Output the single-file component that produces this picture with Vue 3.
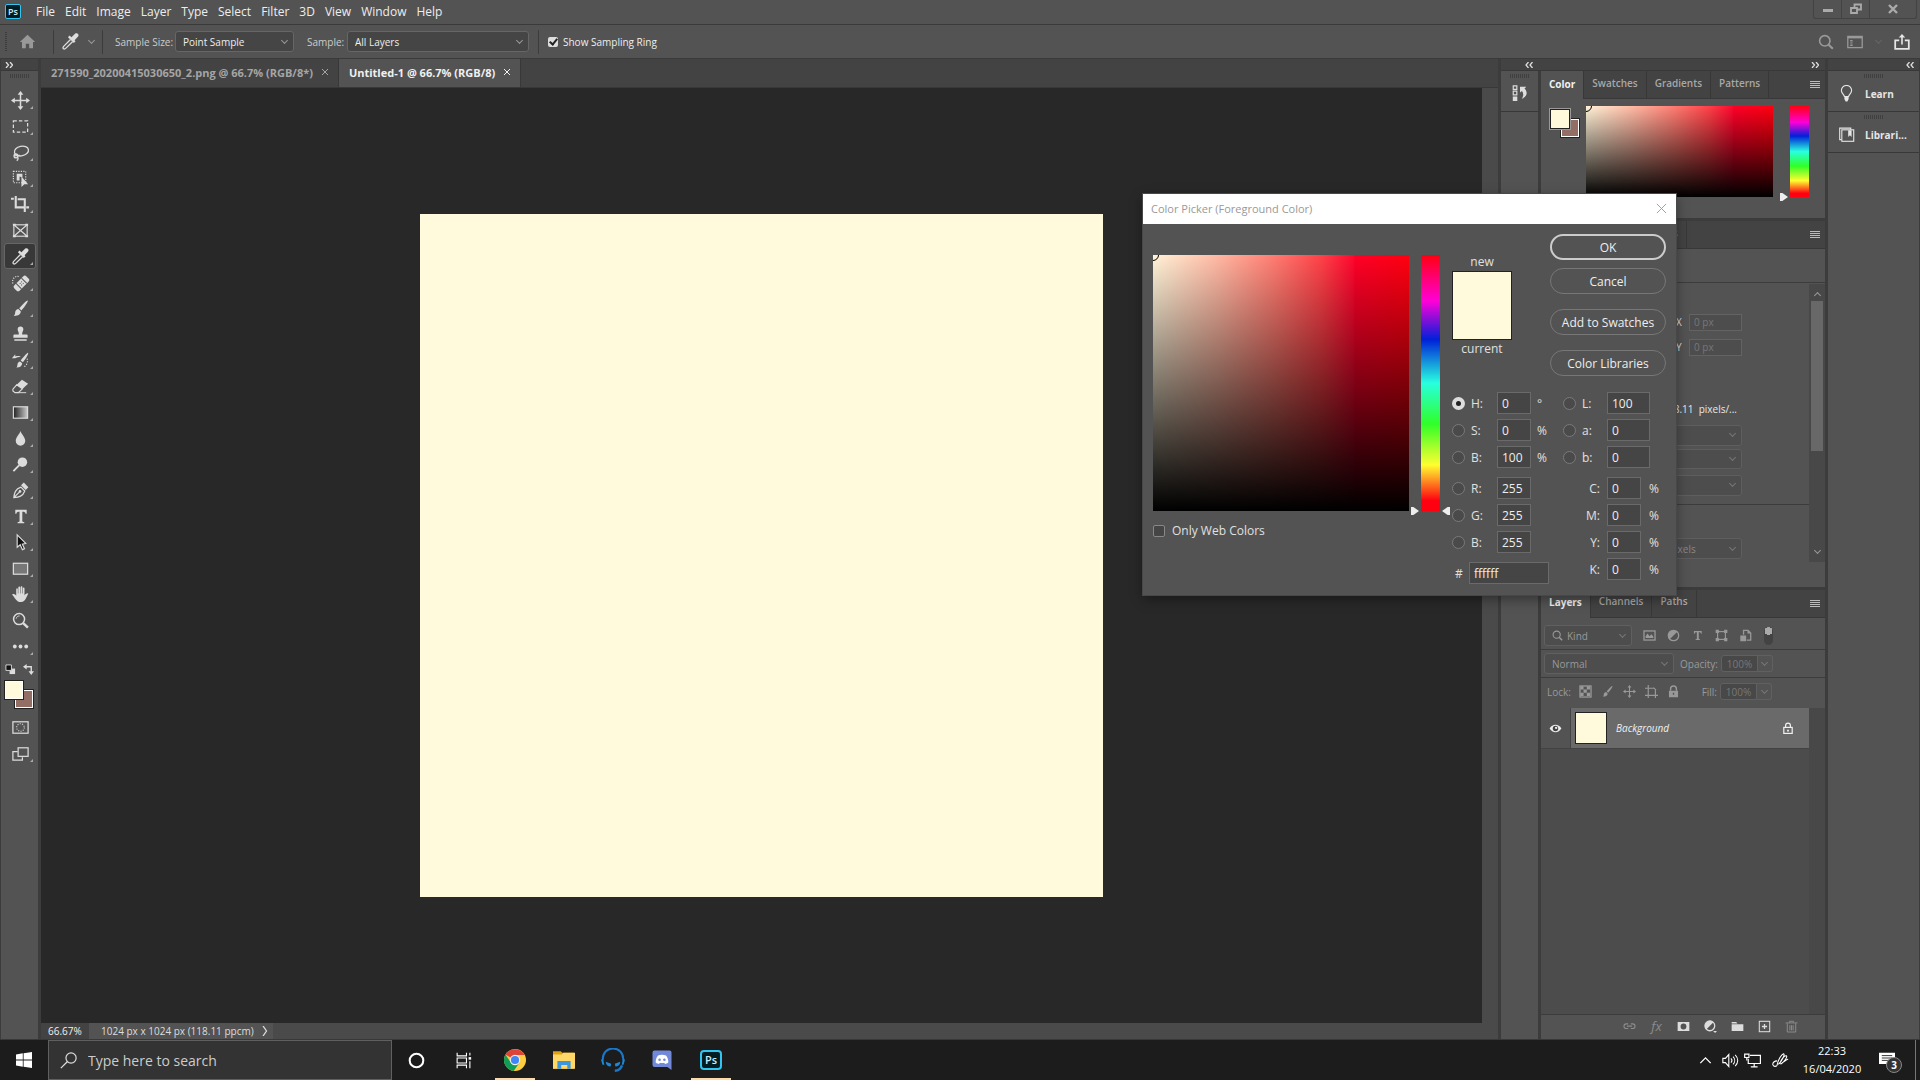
<script setup>
import { reactive, ref } from 'vue'

// inner markup of the 20x20 icons
const icons = {
  move: '<path d="M10 2v16M2 10h16" stroke="currentColor" stroke-width="1.6"/><path d="M10 0l3 4H7zM10 20l3-4H7zM0 10l4-3v6zM20 10l-4-3v6z" fill="currentColor"/>',
  marquee: '<rect x="2.5" y="4" width="15" height="12" fill="none" stroke="currentColor" stroke-width="1.3" stroke-dasharray="3.6 2.2"/>',
  lasso: '<g fill="none" stroke="currentColor" stroke-width="1.4"><ellipse cx="11" cy="8.5" rx="7.5" ry="5" transform="rotate(-12 11 8.5)"/><circle cx="5.2" cy="13.6" r="2"/><path d="M6.5 14.5c1.5 1.5 1 3-.5 4M3.4 13.5l6-.4"/></g>',
  object: '<rect x="2.5" y="2.5" width="13" height="12" fill="none" stroke="currentColor" stroke-width="1.2" stroke-dasharray="1.3 1.3"/><path d="M6 5h6v4l-3-1v4H6zM11 8l7 8h-4l-3 3z" fill="currentColor"/>',
  crop: '<path d="M0 4h3M5 1v12h9M16 13h3M7 4.5h7.5V18" fill="none" stroke="currentColor" stroke-width="2.2"/>',
  frame: '<g fill="none" stroke="currentColor" stroke-width="1.2"><rect x="3" y="4" width="14" height="12"/><path d="M3 4l14 12M17 4L3 16"/></g><path d="M2 3h3v2H2zM15 3h3v2h-3zM2 15h3v2H2zM15 15h3v2h-3z" fill="currentColor"/>',
  dropper: '<path d="M11 5.5l4-3.8c1.8-1.5 4.6.9 3 3l-3.7 4 1 1-1.8 1.8-6.2-6L9 3.8z" fill="currentColor"/><path d="M10 7.8l-6.7 6.8c-.8.8-1.8 1.9-.8 2.9s2.2 0 3-.8L12.3 10" fill="none" stroke="currentColor" stroke-width="1.4"/>',
  heal: '<g transform="rotate(-45 11 11)"><rect x="2" y="7" width="18" height="8" rx="2.5" fill="currentColor"/><path d="M7 7v8M15 7v8" stroke="#535353" stroke-width="1"/><path d="M9.5 9.5h1v1h-1zM11.8 9.5h1v1h-1zM9.5 11.8h1v1h-1zM11.8 11.8h1v1h-1z" fill="#444"/></g><path d="M2 11c-1.500-4 2-9 7-7" fill="none" stroke="currentColor" stroke-width="1.2" stroke-dasharray="1.200 1.400"/>',
  brush: '<path d="M17.500 1.500c1 .5-2.500 6-6.500 10.500L8.600 9.800C12.500 5.500 16.500 1 17.500 1.500zM7.800 10.600l2.500 2.400c0 3.500-3 5-7.500 4.800 1.500-1 1.300-2 1.600-3.800.2-1.800 1.600-3.400 3.400-3.400z" fill="currentColor"/>',
  stamp: '<path d="M10 1.500c2 0 3 1.400 3 3 0 1.800-1.300 2.500-1.300 5.500h4.800c.6 0 1 .4 1 1v2.500h-15V11c0-.6.4-1 1-1h4.800C8.300 7 7 6.300 7 4.500c0-1.600 1-3 3-3zM3.500 15h13v1.500h-13z" fill="currentColor"/>',
  history: '<path d="M18 2c.8.500-2 5.500-5.500 9.800L10.200 10C13.500 6 17.200 1.500 18 2zM9.500 11l2.300 2c-.2 3-2.300 4.500-6.300 4.400 1.300-1 1-1.800 1.300-3.300.3-1.600 1.200-3 2.700-3.100zM1 7.500l3.500-4v2.200c3-.7 5-.4 6 .8-2-.2-4 0-6 1z" fill="currentColor"/><path d="M17 8c1 4-.5 7.500-4 9" fill="none" stroke="currentColor" stroke-width="1.200" stroke-dasharray="1.200 1.600"/>',
  eraser: '<path d="M11.500 3L18 7l-6 5.500L6 8.200z" fill="currentColor"/><path d="M6 8.200l6 4.300-4.300 4H4.200L2 14.800v-2z" fill="none" stroke="currentColor" stroke-width="1.200"/><path d="M7 16.500h9" stroke="currentColor"/>',
  gradient: '<defs><linearGradient id="tg"><stop offset="0" stop-color="#222"/><stop offset="1" stop-color="#ccc"/></linearGradient></defs><rect x="2.500" y="4" width="15" height="12" fill="url(#tg)" stroke="currentColor" stroke-width="1.200"/>',
  blur: '<path d="M10 2c1 3.500 5 6.500 5 10.500a5 5 0 0 1-10 0C5 8.500 9 5.500 10 2z" fill="currentColor"/>',
  dodge: '<circle cx="12" cy="7.500" r="5" fill="currentColor"/><path d="M8.500 11L2.500 17" stroke="currentColor" stroke-width="2"/>',
  pen: '<path d="M3 17.500c.5-5 1.500-9 7.500-11l4 4c-2 5.500-6 6.500-11.500 7zM3 17.500l6-6" fill="none" stroke="currentColor" stroke-width="1.300"/><circle cx="9.500" cy="11" r="1.400" fill="currentColor"/><path d="M10.500 4.500l3-2.800 4.800 4.800-2.800 3z" fill="currentColor"/>',
  type: '<path d="M4.500 3h12v4.200h-1.200c-.2-1.700-.8-2.200-3.400-2.200v9.800c0 .8.500 1 2 1.100V17H7v-1.100c1.600-.1 2-.3 2-1.100V5c-2.500 0-3.100.5-3.300 2.200H4.500z" fill="currentColor"/>',
  select: '<path d="M6.500 2v13l3.200-2.600L12 17.500l2.200-1-2.300-4.800 3.600-.7z" fill="#111" stroke="currentColor" stroke-width="1.200"/>',
  rect: '<rect x="2.500" y="4.500" width="15" height="11.500" fill="#777" stroke="currentColor" stroke-width="1.300"/>',
  hand: '<path d="M5.500 11V4.500c0-1.300 1.700-1.300 1.700 0V9h.5V2.500c0-1.300 1.900-1.300 1.900 0V9h.5V2.300c0-1.300 1.900-1.300 1.900 0V9h.5V3.500c0-1.300 1.700-1.300 1.700 0v7.500c1-2 3.500-3.200 4-1.800-1.800 2.300-2.700 8.600-7.500 8.800-5 .2-6.500-4.500-9.200-7.500C.8 9 3.200 8.800 5.500 11z" fill="currentColor"/>',
  zoom: '<circle cx="8.500" cy="8.500" r="5.800" fill="none" stroke="currentColor" stroke-width="1.600"/><path d="M5.500 8c.3-2 2-2.800 3.500-2.800" fill="none" stroke="currentColor"/><path d="M12.800 12.800l5 4.800" stroke="currentColor" stroke-width="2.600"/>',
  more: '<circle cx="4" cy="10" r="2" fill="currentColor"/><circle cx="10" cy="10" r="2" fill="currentColor"/><circle cx="16" cy="10" r="2" fill="currentColor"/>',
  mask: '<rect x="2" y="4" width="16" height="12" fill="none" stroke="currentColor" stroke-width="1.300"/><circle cx="10" cy="10" r="4" fill="none" stroke="currentColor" stroke-width="1.200" stroke-dasharray="1.100 1.400"/>',
  screen: '<path d="M7 8H2v9h10v-3" fill="none" stroke="currentColor" stroke-width="1.300"/><rect x="7.500" y="4" width="10.500" height="9" fill="none" stroke="currentColor" stroke-width="1.300"/>',
  home: '<path d="M10 2l9 8.500h-2.500V18H12v-5.500H8V18H3.500v-7.500H1z" fill="currentColor"/>',
  workspace: '<rect x="1" y="3" width="18" height="14" fill="none" stroke="currentColor" stroke-width="1.600"/><path d="M1 4.500h18" stroke="currentColor" stroke-width="2"/><path d="M4 7.500h3v2H4zM4 10.500h3v1.500H4zM4 13h3v2H4z" fill="currentColor"/>',
  share: '<path d="M6.500 8H1.500v10.500h17V8h-5" fill="none" stroke="currentColor" stroke-width="2.200"/><path d="M10 13V3" stroke="currentColor" stroke-width="2"/><path d="M10 0l4 4.500H6z" fill="currentColor"/>',
  historyPanel: '<path d="M2.500 2h4v4h-4zM2.500 8h4v4h-4z" fill="none" stroke="currentColor" stroke-width="1.300"/><path d="M2 14h5v5H2zM10 3h7l-2 2c4 4 3 9-3 11.500 2-3.500 2.200-6 .2-8.700L10 9.500z" fill="currentColor"/>',
  bulb: '<path d="M7.500 13.500C7 11 4 10 4 6.500a6 6 0 0 1 12 0c0 3.500-3 4.500-3.500 7z" fill="none" stroke="currentColor" stroke-width="1.300"/><path d="M7.500 14h5v2.500L11 19.500H9l-1.500-3z" fill="currentColor"/>',
  library: '<path d="M4 16H2V2.500h13V4" fill="none" stroke="currentColor" stroke-width="1.300"/><rect x="4.500" y="4.500" width="14" height="13.500" fill="none" stroke="currentColor" stroke-width="1.300"/><path d="M12 5h4v8l-2-2-2 2z" fill="currentColor"/>',
  image: '<rect x="1.500" y="3" width="17" height="14" fill="none" stroke="currentColor" stroke-width="2"/><path d="M4 14V11l3-4 3 4 3-3 3 4v2z" fill="currentColor"/>',
  adjust: '<circle cx="10" cy="10" r="8" fill="none" stroke="currentColor" stroke-width="2"/><path d="M15.800 4.200A8 8 0 0 0 4.200 15.800z" fill="currentColor"/>',
  shape: '<rect x="4" y="4" width="12" height="12" fill="none" stroke="currentColor" stroke-width="1.800"/><path d="M1 1h5v5H1zM14 1h5v5h-5zM1 14h5v5H1zM14 14h5v5h-5z" fill="currentColor"/>',
  smart: '<path d="M7 9V2h7l4 4v11h-6" fill="none" stroke="currentColor" stroke-width="2"/><path d="M13 1v6h6zM2 10h9v9H2z" fill="currentColor"/>',
  checker: '<rect x="1.500" y="1.500" width="17" height="17" fill="none" stroke="currentColor" stroke-width="2"/><path d="M2 2h5v5H2zM12 2h5v5h-5zM7 7h5v5H7zM2 12h5v5H2zM12 12h5v5h-5z" fill="currentColor"/>',
  artboard: '<path d="M5 0v20M0 5h14M0 16h20M16 8v12M13 4l4 4" fill="none" stroke="currentColor" stroke-width="1.800"/>',
  lock: '<path d="M5.500 9V6a4.500 4.500 0 0 1 9 0v3" fill="none" stroke="currentColor" stroke-width="2.200"/><path fill-rule="evenodd" d="M3 9h14v10H3zM9 12v3h2v-3z" fill="currentColor"/>',
  lockOpen: '<path d="M6 9V6a4 4 0 0 1 8 0v3" fill="none" stroke="currentColor" stroke-width="2"/><rect x="3" y="9" width="14" height="10" fill="none" stroke="currentColor" stroke-width="2"/><path d="M8.500 13h3v3h-3z" fill="currentColor"/>',
  eye: '<path d="M1 10c4-7.500 14-7.500 18 0-4 7.500-14 7.500-18 0z" fill="currentColor"/><circle cx="10" cy="10" r="4.200" fill="#444"/><circle cx="11" cy="9" r="1.800" fill="currentColor"/>',
  link: '<path d="M8 13H5a3.500 3.500 0 0 1 0-7h3M12 6h3a3.500 3.500 0 0 1 0 7h-3M6 9.500h8" fill="none" stroke="currentColor" stroke-width="1.700"/>',
  addMask: '<path fill-rule="evenodd" d="M1 3h18v14H1zM10 5.500a4.500 4.500 0 1 0 0 9 4.500 4.500 0 0 0 0-9z" fill="currentColor"/>',
  newAdjust: '<circle cx="9" cy="9" r="7.500" fill="none" stroke="currentColor" stroke-width="2"/><path d="M14.500 3.500A7.800 7.800 0 0 0 3.500 14.500zM14 17h6l-3 3z" fill="currentColor"/>',
  folder: '<path d="M1 3h7l2 2.500H1zM1 6.500h18V17H1z" fill="currentColor"/>',
  add: '<rect x="2" y="2" width="16" height="16" fill="none" stroke="currentColor" stroke-width="1.600"/><path d="M10 6v8M6 10h8" stroke="currentColor" stroke-width="2"/>',
  trash: '<path d="M1 4.500h18M7 4V2h6v2M3.500 5v13.500h13V5M7.500 8v8M10 8v8M12.500 8v8" fill="none" stroke="currentColor" stroke-width="1.500"/>',
  search: '<circle cx="8.500" cy="8.500" r="6.500" fill="none" stroke="currentColor" stroke-width="2"/><path d="M13 13l5.500 5.500" stroke="currentColor" stroke-width="2.600"/>',
  searchFlip: '<circle cx="13" cy="7" r="6" fill="none" stroke="currentColor" stroke-width="1.400"/><path d="M8.800 11.200L1 19" stroke="currentColor" stroke-width="1.500"/>',
  windows: '<path d="M0 3l8.500-1.300v7.800H0zM9.500 1.500L20 0v9.500H9.500zM0 10.500h8.500v7.800L0 17zM9.500 10.500H20V20L9.500 18.500z" fill="#fff"/>',
  cortana: '<circle cx="10" cy="10" r="8" fill="none" stroke="#fff" stroke-width="2.400"/>',
  taskView: '<path d="M2.500 1v3.500h11V1M2.500 19v-3.500h11V19M2.500 7h11v6h-11zM17.500 1v3M17.500 11v8" fill="none" stroke="#fff" stroke-width="1.300"/><path d="M16 6h3v3h-3z" fill="#fff"/>',
  chrome: '<circle cx="10" cy="10" r="10" fill="#ffcd40"/><path d="M10 10L1.300 5A10 10 0 0 1 18.700 5.500H10z" fill="#db4437"/><path d="M1.300 5a10 10 0 0 0 7.500 14.900L14 12.500 6 12z" fill="#0f9d58"/><circle cx="10" cy="10" r="4.700" fill="#eee"/><circle cx="10" cy="10" r="3.700" fill="#4285f4"/>',
  explorer: '<path d="M0 2h7l1.500 1.500H19V18H0z" fill="#e2a113"/><path d="M0 5h8l1.500-1.500H20V18H0z" fill="#ffd766"/><path d="M4 11h12v7h-3v-3.500H7.500V18H4z" fill="#3a96dd"/>',
  headset: '<path d="M1.500 10.500C.5-3 19.500-3 18.500 10.500" fill="none" stroke="#1a77c9" stroke-width="1.600"/><path d="M0 9.500h1.800l1 4.500H1.200zM20 9.500h-1.800l-1 4.500h1.600zM4 11.500l4.500 1.700-.5 2.300c-2.500 0-4-1.500-4-4zM16 11.500l-4.500 1.700.5 2.300c2.500 0 4-1.500 4-4z" fill="#1e88d8"/><path d="M17.500 14.500c-1 3.500-3 4.300-6 4.500" fill="none" stroke="#1a77c9" stroke-width="2"/>',
  discord: '<path d="M2.500.5h15a2 2 0 0 1 2 2V20L15.500 17h-13a2 2 0 0 1-2-2V2.500a2 2 0 0 1 2-2z" fill="#7289da"/><path d="M6 5.500c2.500-1 5.500-1 8 0 1.500 2 2.500 4.500 2.300 7-1.300 1-2.300 1.400-3.300 1.500l-.8-1.300c-1.300.3-3.100.3-4.400 0L7 14c-1-.1-2-.5-3.300-1.500C3.500 10 4.500 7.500 6 5.500z" fill="#fff"/><circle cx="7.600" cy="9.800" r="1.300" fill="#7289da"/><circle cx="12.400" cy="9.800" r="1.300" fill="#7289da"/>',
  up: '<path d="M2 14l8-8 8 8" fill="none" stroke="currentColor" stroke-width="2"/>',
  volume: '<path d="M1 7.500h3l4-4.500v14l-4-4.500H1z" fill="none" stroke="#fff" stroke-width="1.300"/><path d="M10.500 7.500c1.500 1.500 1.500 3.500 0 5M13 5.500c2.600 2.600 2.600 6.400 0 9M15.500 3.500c4 4 4 9 0 13" fill="none" stroke="#fff" stroke-width="1.200"/>',
  network: '<path d="M7 4h12.300v9.500H5V8M12 14v3.500M8 17.500h8" fill="none" stroke="#fff" stroke-width="1.400"/><path d="M.8 2.500h5v4h-5zM3.300 7v3" fill="none" stroke="#fff" stroke-width="1.400"/>',
  ink: '<path d="M6 15.500C7 9 11 3 13.500 2c2.500.5-2 9-6 12.500M9 14C11 8 15 3.500 17 4.500c1.500 1.500-3 7.500-7 10M6 10.500c-3 0-5.500 2-5 4.500s4.500 2.500 5 .5M12 12.500c3.500-1.500 5-4 7-4" fill="none" stroke="#fff" stroke-width="1.300"/>',
  note: '<path d="M0 1h20v14h-4v4l-4.500-4H0z" fill="#fff"/><path d="M3.500 4.500h13M3.500 7.500h13M3.500 10.500h9" stroke="#1c1c1c" stroke-width="1.100"/>',
}

const menus = ['File', 'Edit', 'Image', 'Layer', 'Type', 'Select', 'Filter', '3D', 'View', 'Window', 'Help']

const tools = [
  'move', 'marquee', 'lasso', 'object', 'crop', 'frame', 'dropper', 'heal', 'brush', 'stamp', 'history',
  'eraser', 'gradient', 'blur', 'dodge', 'pen', 'type', 'select', 'rect', 'hand', 'zoom', 'more',
]
const plainTools = ['frame', 'zoom']
const activeTool = ref('dropper')

const docs = ['271590_20200415030650_2.png @ 66.7% (RGB/8*)', 'Untitled-1 @ 66.7% (RGB/8)']
const activeDoc = ref(1)

const colorTabs = ['Color', 'Swatches', 'Gradients', 'Patterns']
const layerTabs = ['Layers', 'Channels', 'Paths']
const filterIcons = ['image', 'adjust', 'type', 'shape', 'smart']
const lockIcons = ['checker', 'brush', 'move', 'artboard', 'lock']

const showRing = ref(true)
const webOnly = ref(false)
const channel = ref('H')
const hex = ref('ffffff')

const hsb = reactive([
  { id: 'H', label: 'H:', value: '0', unit: '°' },
  { id: 'S', label: 'S:', value: '0', unit: '%' },
  { id: 'V', label: 'B:', value: '100', unit: '%' },
])
const rgb = reactive([
  { id: 'R', label: 'R:', value: '255', unit: '' },
  { id: 'G', label: 'G:', value: '255', unit: '' },
  { id: 'B', label: 'B:', value: '255', unit: '' },
])
const lab = reactive([
  { id: 'L', label: 'L:', value: '100' },
  { id: 'a', label: 'a:', value: '0' },
  { id: 'b', label: 'b:', value: '0' },
])
const cmyk = reactive([
  { id: 'C', label: 'C:', value: '0' },
  { id: 'M', label: 'M:', value: '0' },
  { id: 'Y', label: 'Y:', value: '0' },
  { id: 'K', label: 'K:', value: '0' },
])

const apps = ['cortana', 'taskView', 'chrome', 'explorer', 'headset', 'discord']
const tray = ['up', 'volume', 'network', 'ink']
</script>

<template>
  <div class="app">
    <header class="menubar">
      <span class="ps-logo">Ps</span>
      <nav class="menus">
        <a v-for="m in menus" :key="m" href="#">{{ m }}</a>
      </nav>
      <div class="window-buttons">
        <button aria-label="Minimize"><svg viewBox="0 0 12 12"><path d="M1 6h10v3H1z" fill="currentColor"/></svg></button>
        <button aria-label="Restore"><svg viewBox="0 0 12 12"><path d="M4.500 4.500V1.500h6.500v5H7.500M1 5h6v5H1z" fill="none" stroke="currentColor" stroke-width="1.800"/></svg></button>
        <button class="wide" aria-label="Close"><svg viewBox="0 0 12 12"><path d="M2 2l8 8M10 2l-8 8" stroke="currentColor" stroke-width="2.400"/></svg></button>
      </div>
    </header>

    <div class="options">
      <i class="grip-v"></i>
      <button class="home" aria-label="Home"><svg viewBox="0 0 20 20" v-html="icons.home"></svg></button>
      <i class="sep"></i>
      <button class="current-tool" aria-label="Eyedropper">
        <svg viewBox="0 0 20 20" v-html="icons.dropper"></svg>
        <i class="caret"></i>
      </button>
      <i class="sep"></i>
      <label class="opt-label" for="size">Sample Size:</label>
      <span class="drop size"><select id="size"><option>Point Sample</option></select><i class="caret"></i></span>
      <label class="opt-label second" for="sample">Sample:</label>
      <span class="drop sample"><select id="sample"><option>All Layers</option></select><i class="caret"></i></span>
      <i class="sep"></i>
      <label class="ring"><input v-model="showRing" type="checkbox" class="tick">Show Sampling Ring</label>
      <div class="options-right">
        <button aria-label="Search"><svg viewBox="0 0 20 20" v-html="icons.search"></svg></button>
        <button aria-label="Workspace"><svg viewBox="0 0 20 20" v-html="icons.workspace"></svg></button>
        <i class="caret dim"></i>
        <button class="bright" aria-label="Share"><svg viewBox="0 0 20 20" v-html="icons.share"></svg></button>
      </div>
    </div>

    <main class="workspace">
      <aside class="tools">
        <div class="strip left"><svg class="chev" viewBox="0 0 8 6"><path d="M1 0l2.500 3L1 6M5 0l2.500 3L5 6"/></svg></div>
        <i class="grip"></i>
        <button
          v-for="t in tools"
          :key="t"
          class="tool"
          :class="{ active: t === activeTool, corner: !plainTools.includes(t) }"
          :aria-label="t"
          @click="activeTool = t"
        >
          <svg viewBox="0 0 20 20" v-html="icons[t]"></svg>
        </button>
        <div class="swap-row">
          <svg viewBox="0 0 12 12"><path d="M5 5h6v6H5z" fill="#ddd"/><path d="M1 1h6v6H1z" fill="#111" stroke="#ddd"/></svg>
          <svg viewBox="0 0 12 12"><path d="M3 3h6v6" fill="none" stroke="#ddd" stroke-width="1.500"/><path d="M0 3l4-3v6zM9 12L6 8h6z" fill="#ddd"/></svg>
        </div>
        <div class="pair"><i class="back"></i><i class="front"></i></div>
        <button class="tool" aria-label="Quick mask"><svg viewBox="0 0 20 20" v-html="icons.mask"></svg></button>
        <button class="tool corner" aria-label="Screen mode"><svg viewBox="0 0 20 20" v-html="icons.screen"></svg></button>
      </aside>

      <section class="document">
        <div class="doc-tabs">
          <button v-for="(d, i) in docs" :key="d" :class="{ active: i === activeDoc }" @click="activeDoc = i">
            {{ d }}
            <svg viewBox="0 0 8 8"><path d="M1 1l6 6M7 1L1 7" stroke="currentColor"/></svg>
          </button>
        </div>
        <div class="stage">
          <div class="canvas"><div class="artboard"></div></div>
          <div class="doc-scroll"></div>
        </div>
        <div class="status">
          <span class="zoom-level">66.67%</span>
          <span class="doc-info">1024 px x 1024 px (118.11 ppcm)<svg viewBox="0 0 6 10"><path d="M1 0l3.500 5L1 10" fill="none" stroke="currentColor" stroke-width="1.300"/></svg></span>
        </div>
      </section>

      <section class="dock">
        <div class="strip double">
          <svg class="chev" viewBox="0 0 8 6"><path d="M3.500 0L1 3l2.500 3M7.500 0L5 3l2.500 3"/></svg>
          <svg class="chev" viewBox="0 0 8 6"><path d="M1 0l2.500 3L1 6M5 0l2.500 3L5 6"/></svg>
        </div>
        <div class="dock-body">
          <div class="icon-dock">
            <div class="dock-cell">
              <i class="grip"></i>
              <svg viewBox="0 0 20 20" v-html="icons.historyPanel"></svg>
            </div>
          </div>

          <div class="panels">
            <section class="panel color-panel">
              <div class="tabs">
                <button v-for="(t, i) in colorTabs" :key="t" :class="{ active: i === 0 }">{{ t }}</button>
                <i class="burger"></i>
              </div>
              <div class="color-body">
                <div class="pair small"><i class="back"></i><i class="front"></i></div>
                <div class="field"><i class="ring-mark"></i></div>
                <div class="hue"><i class="arrow-l"></i></div>
              </div>
            </section>

            <section class="panel props-panel">
              <div class="tabs">
                <button>Properties</button>
                <button>Adjustments</button>
                <i class="burger"></i>
              </div>
              <div class="props-head">Document</div>
              <div class="props-body">
                <div class="props-main">
                  <div class="coords">
                    <label for="px">X</label><input id="px" value="0 px">
                    <label for="py">Y</label><input id="py" value="0 px">
                  </div>
                  <p class="resolution">Resolution: 118.11&nbsp; pixels/...</p>
                  <span class="drop"><select aria-label="Mode"><option></option></select><i class="caret"></i></span>
                  <span class="drop depth"><select aria-label="Depth"><option>8 Bits/Channel</option></select><i class="caret"></i></span>
                  <span class="drop fill"><select aria-label="Fill"><option></option></select><i class="caret"></i></span>
                  <hr>
                  <span class="drop"><select aria-label="Units"><option>Pixels</option></select><i class="caret"></i></span>
                </div>
                <div class="scroll"><i class="caret flip"></i><i class="thumb"></i><i class="caret"></i></div>
              </div>
            </section>

            <section class="panel layers-panel">
              <div class="tabs">
                <button v-for="(t, i) in layerTabs" :key="t" :class="{ active: i === 0 }">{{ t }}</button>
                <i class="burger"></i>
              </div>
              <div class="row filter-row">
                <span class="drop kind">
                  <svg viewBox="0 0 20 20" v-html="icons.search"></svg>
                  <select aria-label="Filter"><option>Kind</option></select><i class="caret"></i>
                </span>
                <div class="icon-set">
                  <svg v-for="f in filterIcons" :key="f" viewBox="0 0 20 20" v-html="icons[f]"></svg>
                </div>
                <i class="switch"></i>
              </div>
              <div class="row">
                <span class="drop blend"><select aria-label="Blend mode"><option>Normal</option></select><i class="caret"></i></span>
                <label class="amount">Opacity:<input value="100%"><b><i class="caret"></i></b></label>
              </div>
              <div class="row lock-row">
                <span class="lock-label">Lock:</span>
                <div class="icon-set">
                  <svg v-for="l in lockIcons" :key="l" viewBox="0 0 20 20" v-html="icons[l]"></svg>
                </div>
                <label class="amount">Fill:<input value="100%"><b><i class="caret"></i></b></label>
              </div>
              <div class="layer-list">
                <div class="layer">
                  <button class="eye" aria-label="Visibility"><svg viewBox="0 0 20 20" v-html="icons.eye"></svg></button>
                  <div class="layer-main">
                    <i class="layer-thumb"></i>
                    <em>Background</em>
                    <svg viewBox="0 0 20 20" v-html="icons.lockOpen"></svg>
                  </div>
                </div>
              </div>
              <div class="layer-foot">
                <svg class="off" viewBox="0 0 20 20" v-html="icons.link"></svg>
                <span class="off">fx</span>
                <svg viewBox="0 0 20 20" v-html="icons.addMask"></svg>
                <svg viewBox="0 0 20 20" v-html="icons.newAdjust"></svg>
                <svg viewBox="0 0 20 20" v-html="icons.folder"></svg>
                <svg viewBox="0 0 20 20" v-html="icons.add"></svg>
                <svg class="off" viewBox="0 0 20 20" v-html="icons.trash"></svg>
              </div>
            </section>
          </div>
        </div>
      </section>

      <aside class="side">
        <div class="strip right"><svg class="chev" viewBox="0 0 8 6"><path d="M3.500 0L1 3l2.500 3M7.500 0L5 3l2.500 3"/></svg></div>
        <div class="dock-cell"><i class="grip"></i><button><svg viewBox="0 0 20 20" v-html="icons.bulb"></svg>Learn</button></div>
        <div class="dock-cell"><i class="grip"></i><button><svg viewBox="0 0 20 20" v-html="icons.library"></svg>Librari...</button></div>
      </aside>
    </main>

    <footer class="taskbar">
      <button class="start" aria-label="Start"><svg viewBox="0 0 20 20" v-html="icons.windows"></svg></button>
      <label class="task-search">
        <svg viewBox="0 0 20 20" v-html="icons.searchFlip"></svg>
        <input type="text" placeholder="Type here to search" aria-label="Search">
      </label>
      <button v-for="a in apps" :key="a" class="task" :class="[a, { open: a === 'chrome' }]" :aria-label="a">
        <svg viewBox="0 0 20 20" v-html="icons[a]"></svg>
      </button>
      <button class="task open"><span class="ps-logo big">Ps</span></button>
      <div class="tray">
        <svg v-for="t in tray" :key="t" :class="t" viewBox="0 0 20 20" v-html="icons[t]"></svg>
        <div class="clock"><span>22:33</span><span>16/04/2020</span></div>
        <button class="note" aria-label="Notifications"><svg viewBox="0 0 20 20" v-html="icons.note"></svg><b>3</b></button>
        <i class="peek"></i>
      </div>
    </footer>

    <form class="picker" @submit.prevent>
      <div class="picker-title">
        <span>Color Picker (Foreground Color)</span>
        <button type="button" aria-label="Close"><svg viewBox="0 0 12 12"><path d="M1 1l10 10M11 1L1 11" stroke="currentColor"/></svg></button>
      </div>
      <div class="picker-body">
        <div class="picker-left">
          <div class="picker-fields">
            <div class="field"><i class="ring-mark"></i></div>
            <div class="hue"><i class="arrow-l"></i><i class="arrow-r"></i></div>
          </div>
          <label class="web"><input v-model="webOnly" type="checkbox" class="tick">Only Web Colors</label>
        </div>
        <div class="picker-right">
          <div class="picker-top">
            <div class="preview"><span>new</span><i></i><span>current</span></div>
            <div class="actions">
              <button type="submit" class="ok">OK</button>
              <button type="button">Cancel</button>
              <button type="button" class="spaced">Add to Swatches</button>
              <button type="button" class="spaced">Color Libraries</button>
            </div>
          </div>
          <div class="values">
            <div class="value-col">
              <div class="group">
                <div v-for="c in hsb" :key="c.id" class="value">
                  <input :id="'r' + c.id" v-model="channel" type="radio" name="channel" :value="c.id">
                  <label :for="'r' + c.id">{{ c.label }}</label>
                  <input v-model="c.value" type="text" :aria-label="c.label">
                  <span>{{ c.unit }}</span>
                </div>
              </div>
              <div class="group">
                <div v-for="c in rgb" :key="c.id" class="value">
                  <input :id="'r' + c.id" v-model="channel" type="radio" name="channel" :value="c.id">
                  <label :for="'r' + c.id">{{ c.label }}</label>
                  <input v-model="c.value" type="text" :aria-label="c.label">
                </div>
              </div>
              <div class="hex"><label for="hex">#</label><input id="hex" v-model="hex" type="text"></div>
            </div>
            <div class="value-col">
              <div class="group lab">
                <div v-for="c in lab" :key="c.id" class="value">
                  <input :id="'r' + c.id" v-model="channel" type="radio" name="channel" :value="c.id">
                  <label :for="'r' + c.id">{{ c.label }}</label>
                  <input v-model="c.value" type="text" :aria-label="c.label">
                </div>
              </div>
              <div class="group cmyk">
                <div v-for="c in cmyk" :key="c.id" class="value">
                  <label :for="'i' + c.id">{{ c.label }}</label>
                  <input :id="'i' + c.id" v-model="c.value" type="text">
                  <span>%</span>
                </div>
              </div>
            </div>
          </div>
        </div>
      </div>
    </form>
  </div>
</template>

<style>
body {
  margin: 0;
  background: #535353;
}
</style>

<style scoped>
.app {
  position: relative;
  display: flex;
  flex-direction: column;
  height: 100vh;
  overflow: hidden;
  background: #535353;
  color: #ddd;
  font-family: "Open Sans", "Noto Sans", sans-serif;
  font-size: 10px;
}

.app * {
  box-sizing: border-box;
}

button, input, select {
  margin: 0;
  padding: 0;
  border: 0;
  background: none;
  color: inherit;
  font: inherit;
  outline: none;
}

svg {
  display: block;
  flex: none;
}

a {
  color: inherit;
  text-decoration: none;
}

/* menu bar */
.menubar {
  display: flex;
  align-items: center;
  height: 25px;
  flex: none;
  padding-left: 5px;
  padding-bottom: 1px;
  border-bottom: 1px solid #3a3a3a;
}

.ps-logo {
  width: 16px;
  height: 15px;
  border: 1px solid #31c5f0;
  border-radius: 2px;
  background: #001d26;
  color: #c9ecf8;
  font-size: 9px;
  font-weight: 600;
  line-height: 13px;
  text-align: center;
}

.menus {
  display: flex;
  gap: 10px;
  margin-left: 15px;
  color: #eee;
  font-size: 12px;
}

.window-buttons {
  display: flex;
  align-self: flex-start;
  height: 19px;
  margin-left: auto;
  margin-right: 3px;
  border: 1px solid #434343;
  border-top: 0;
  border-radius: 0 0 3px 3px;
  color: #aaa;
}

.window-buttons button {
  display: grid;
  place-items: center;
  width: 28px;
  border-right: 1px solid #434343;
}

.window-buttons .wide {
  width: 46px;
  border: 0;
}

.window-buttons svg {
  width: 12px;
}

/* options bar */
.options {
  display: flex;
  align-items: center;
  height: 34px;
  flex: none;
  padding-left: 5px;
  border-bottom: 1px solid #3a3a3a;
}

.grip-v {
  width: 2px;
  height: 20px;
  background: repeating-linear-gradient(#3c3c3c 0 1px, transparent 1px 2px);
}

.sep {
  width: 1px;
  height: 24px;
  background: #3c3c3c;
}

.home {
  margin: 0 17px 0 12px;
  color: #999;
}

.home svg {
  width: 17px;
}

.current-tool {
  display: flex;
  align-items: center;
  gap: 9px;
  width: 48px;
  padding-left: 7px;
}

.current-tool svg {
  width: 19px;
}

.caret {
  display: block;
  flex: none;
  width: 5px;
  height: 5px;
  margin-top: -3px;
  border: solid #999;
  border-width: 0 1px 1px 0;
  transform: rotate(45deg);
}

.caret.dim {
  border-color: #666;
}

.caret.flip {
  margin: 3px 0 0;
  transform: rotate(225deg);
}

.opt-label {
  width: 60px;
  margin-left: 12px;
  color: #ccc;
}

.opt-label.second {
  width: 40px;
  margin-left: 13px;
}

.drop {
  display: flex;
  align-items: center;
  height: 21px;
  padding-right: 6px;
  border: 1px solid #666;
  border-radius: 3px;
  background: #454545;
  color: #eee;
}

.drop select {
  flex: 1;
  min-width: 0;
  padding-left: 7px;
  appearance: none;
}

.drop.size {
  width: 119px;
}

.drop.sample {
  width: 182px;
  margin-right: 9px;
}

.ring {
  display: flex;
  align-items: center;
  gap: 5px;
  margin-left: 9px;
  color: #eee;
}

.tick {
  width: 10px;
  height: 10px;
  border-radius: 2px;
  background: #454545;
  appearance: none;
}

.tick:checked {
  display: grid;
  place-items: center;
  background: #ddd;
}

.tick:checked::after {
  content: "";
  width: 3px;
  height: 6px;
  margin-top: -2px;
  border: solid #222;
  border-width: 0 2px 2px 0;
  transform: rotate(40deg);
}

.options-right {
  display: flex;
  align-items: center;
  gap: 13px;
  margin-left: auto;
  margin-right: 10px;
  color: #999;
}

.options-right svg {
  width: 16px;
}

.bright {
  color: #e6e6e6;
}

/* workspace columns */
.workspace {
  display: flex;
  flex: 1;
  gap: 3px;
  min-height: 0;
  padding: 0 1px;
  border-bottom: 1px solid #383838;
  background: #3c3c3c;
}

.strip {
  display: flex;
  align-items: center;
  height: 12px;
  flex: none;
  border-bottom: 1px solid #383838;
  background: #434343;
}

.strip.left {
  align-self: stretch;
  padding-left: 4px;
}

.strip.right {
  justify-content: flex-end;
  padding-right: 5px;
}

.strip.double {
  padding-left: 24px;
  padding-right: 6px;
  justify-content: space-between;
}

.chev {
  width: 8px;
  height: 6px;
  fill: none;
  stroke: #ddd;
  stroke-width: 1.3;
}

.grip {
  width: 20px;
  height: 4px;
  background: repeating-linear-gradient(90deg, #404040 0 1px, transparent 1px 2px);
}

/* tools */
.tools {
  display: flex;
  flex-direction: column;
  align-items: center;
  width: 37px;
  flex: none;
  background: #535353;
}

.tools .grip {
  margin: 3px 0 9px;
}

.tool {
  position: relative;
  display: grid;
  place-items: center;
  width: 32px;
  height: 26px;
  padding-left: 2px;
  border: 1px solid transparent;
  border-radius: 3px;
  color: #dcdcdc;
}

.tool.active {
  border-color: #666;
  background: #383838;
}

.tool svg {
  width: 19px;
}

.tool.corner::after {
  content: "";
  position: absolute;
  right: 2px;
  bottom: 3px;
  border-left: 3px solid transparent;
  border-bottom: 3px solid #aaa;
}

.swap-row {
  display: flex;
  justify-content: space-between;
  width: 29px;
  margin: 5px 1px 0 0;
}

.swap-row svg {
  width: 11px;
}

.pair {
  position: relative;
  width: 30px;
  height: 29px;
  margin: 5px 1px 5px 0;
}

.pair i {
  position: absolute;
  width: 20px;
  height: 20px;
  border: 1px solid #222;
}

.pair .front {
  top: 0;
  left: 0;
  background: #fffadc;
  box-shadow: inset 0 0 0 1px #fff;
}

.pair .back {
  right: 0;
  bottom: 0;
  background: #926e64;
  box-shadow: inset 0 0 0 1px #fff;
}

.pair.small .front {
  box-shadow: 0 0 0 1px #999;
}

/* document */
.document {
  display: flex;
  flex: 1;
  flex-direction: column;
  min-width: 0;
}

.doc-tabs {
  display: flex;
  height: 29px;
  flex: none;
  border-bottom: 1px solid #383838;
  background: #434343;
}

.doc-tabs button {
  display: flex;
  align-items: center;
  gap: 8px;
  padding: 0 9px 2px 10px;
  border-right: 1px solid #383838;
  color: #a5a5a5;
  font-size: 11px;
  font-weight: 700;
}

.doc-tabs .active {
  background: #535353;
  color: #f0f0f0;
}

.doc-tabs svg {
  width: 8px;
}

.stage {
  display: flex;
  flex: 1;
}

.canvas {
  display: grid;
  flex: 1;
  place-items: center;
  background: #282828;
}

.artboard {
  width: 683px;
  height: 683px;
  background: #fffadc;
}

.doc-scroll {
  width: 16px;
  background: #4a4a4a;
}

.status {
  display: flex;
  height: 16px;
  flex: none;
  background: #4a4a4a;
  line-height: 16px;
}

.zoom-level {
  width: 48px;
  padding-left: 7px;
  background: #434343;
  color: #f0f0f0;
}

.doc-info {
  display: flex;
  align-items: center;
  gap: 8px;
  padding: 0 5px 0 12px;
  background: #535353;
}

.doc-info svg {
  width: 6px;
}

/* right dock */
.dock {
  display: flex;
  flex-direction: column;
  width: 324px;
  flex: none;
}

.dock-body {
  display: flex;
  flex: 1;
  gap: 3px;
}

.icon-dock {
  width: 37px;
  flex: none;
  background: #535353;
}

.dock-cell {
  display: flex;
  flex-direction: column;
  align-items: center;
  height: 41px;
  padding-top: 3px;
  border-bottom: 1px solid #383838;
}

.icon-dock svg {
  width: 18px;
  margin-top: 6px;
}

.panels {
  display: flex;
  flex: 1;
  flex-direction: column;
  gap: 3px;
  min-width: 0;
}

.panel {
  background: #535353;
}

.tabs {
  display: flex;
  align-items: center;
  height: 28px;
  padding-right: 5px;
  border-bottom: 1px solid #383838;
  background: #434343;
}

.tabs button {
  align-self: stretch;
  padding: 0 8px 3px;
  border-right: 1px solid #383838;
  color: #a8a8a8;
  font-weight: 600;
}

.tabs .active {
  margin-bottom: -1px;
  background: #535353;
  color: #f0f0f0;
  font-weight: 700;
}

.burger {
  width: 10px;
  height: 7px;
  margin-left: auto;
  background: repeating-linear-gradient(#bbb 0 1px, transparent 1px 2px);
}

.color-body {
  display: flex;
  height: 119px;
  padding: 7px 16px 0 9px;
}

.color-body .pair {
  flex: none;
  margin: 3px 6px 0 0;
}

.field {
  position: relative;
  flex: 1;
  height: 91px;
  overflow: hidden;
  background:
    linear-gradient(rgba(0, 0, 0, 0), #000),
    linear-gradient(90deg, #fff3d8, #ffb9a4 25%, #ff7a70 48%, #ff4048 66%, #ff0a30 78%, #ff0028 79%, #ff0010);
}

.ring-mark {
  position: absolute;
  top: -6px;
  left: -6px;
  width: 12px;
  height: 12px;
  border: 1px solid #000;
  border-radius: 50%;
}

.hue {
  position: relative;
  width: 19px;
  height: 91px;
  margin-left: 17px;
  background: linear-gradient(#ff0010, #ff00d8 18%, #0020d8 33%, #28ffe0 50%, #30ff28 66%, #ffff30 82%, #ff0010 96%);
}

.arrow-l, .arrow-r {
  position: absolute;
  bottom: -4px;
  width: 8px;
  height: 8px;
  background: #eee;
  clip-path: polygon(0 0, 30% 0, 100% 50%, 30% 100%, 0 100%);
}

.arrow-l {
  left: -10px;
}

.arrow-r {
  right: -10px;
  transform: scaleX(-1);
}

/* properties */
.props-panel {
  height: 366px;
}

.props-head {
  height: 34px;
  padding: 8px;
  border-bottom: 1px solid #3c3c3c;
}

.props-body {
  display: flex;
  height: 279px;
}

.props-main {
  display: flex;
  flex: 1;
  flex-direction: column;
  padding-top: 31px;
}

.coords {
  display: grid;
  grid-template-columns: 7px 53px;
  gap: 8px 6px;
  justify-content: end;
  margin-right: 67px;
  line-height: 17px;
}

.coords input {
  width: 53px;
  height: 17px;
  padding-left: 4px;
  border: 1px solid #636363;
  background: #4d4d4d;
  color: #777;
}

.resolution {
  margin: 46px 72px 9px 0;
  color: #e8e8e8;
  line-height: 14px;
  text-align: right;
}

.props-main .drop {
  width: 150px;
  height: 22px;
  margin: 0 67px 3px auto;
  border-color: #5e5e5e;
  background: #4d4d4d;
  color: #888;
}

.props-main .caret, .layers-panel .caret {
  border-color: #777;
}

.props-main select {
  padding-left: 76px;
}

.props-main .depth select {
  padding-left: 16px;
}

.props-main .drop.fill {
  margin-top: 3px;
  margin-bottom: 8px;
}

.props-main hr {
  width: 100%;
  height: 1px;
  margin: 0 0 34px;
  border: 0;
  background: #3c3c3c;
}

.scroll {
  display: flex;
  flex-direction: column;
  align-items: center;
  width: 16px;
  margin-top: 1px;
  padding: 6px 0 9px;
  background: #484848;
}

.scroll .thumb {
  width: 12px;
  height: 150px;
  margin: 3px 0 auto;
  background: #686868;
}

/* layers */
.layers-panel {
  display: flex;
  flex: 1;
  flex-direction: column;
  color: #999;
}

.layers-panel .tabs button {
  padding-bottom: 5px;
}

.row {
  display: flex;
  align-items: center;
  height: 28px;
  flex: none;
  padding-left: 3px;
  border-bottom: 1px solid #3c3c3c;
}

.filter-row {
  height: 32px;
  padding-top: 4px;
}

.layers-panel .drop {
  border-color: #606060;
  background: #4d4d4d;
  color: #999;
}

.drop.kind {
  width: 88px;
  padding-left: 7px;
}

.kind svg {
  width: 11px;
}

.kind select {
  padding-left: 4px;
}

.drop.blend {
  width: 130px;
}

.icon-set {
  display: flex;
  gap: 11px;
  margin-left: 11px;
}

.icon-set svg {
  width: 13px;
}

.switch {
  width: 9px;
  height: 18px;
  margin-left: 12px;
  border-radius: 5px;
  background: radial-gradient(circle at 50% 4px, #aaa 0 4px, #434343 4px);
}

.amount {
  display: flex;
  align-items: center;
  margin-left: 6px;
}

.amount input {
  width: 37px;
  height: 17px;
  margin-left: 3px;
  border: 1px solid #606060;
  border-radius: 3px 0 0 3px;
  background: #484848;
  color: #777;
  text-align: center;
}

.amount b {
  display: grid;
  place-items: center;
  width: 15px;
  height: 17px;
  border: 1px solid #606060;
  border-left: 0;
  border-radius: 0 3px 3px 0;
}

.lock-row {
  height: 30px;
  padding-bottom: 3px;
  border: 0;
}

.lock-row .icon-set {
  gap: 9px;
  margin-left: 9px;
}

.lock-row .amount {
  margin-left: auto;
  margin-right: 53px;
}

.lock-label {
  width: 23px;
  margin-left: 3px;
}

.layer-list {
  flex: 1;
  padding-right: 16px;
  background: linear-gradient(90deg, #4c4c4c calc(100% - 16px), #484848 0);
}

.layer {
  display: flex;
  height: 41px;
  border-bottom: 1px solid #434343;
  background: #535353;
}

.eye {
  display: grid;
  place-items: center;
  width: 30px;
  border-right: 1px solid #434343;
  color: #eee;
}

.eye svg {
  width: 13px;
}

.layer-main {
  display: flex;
  flex: 1;
  align-items: center;
  padding: 0 15px 0 4px;
  background: #6a6a6a;
  color: #f0f0f0;
}

.layer-main svg {
  width: 12px;
  margin-left: auto;
}

.layer-thumb {
  width: 32px;
  height: 32px;
  margin-right: 9px;
  border: 1px solid #222;
  background: #fffadc;
}

.layer-foot {
  display: flex;
  align-items: center;
  justify-content: flex-end;
  gap: 14px;
  height: 25px;
  padding: 0 27px 2px 0;
  border-top: 1px solid #3c3c3c;
  color: #ddd;
}

.layer-foot svg {
  width: 13px;
}

.layer-foot span {
  width: 13px;
  font-size: 13px;
  font-style: italic;
  text-align: center;
}

.layer-foot .off {
  color: #8c8c8c;
}

/* learn / libraries */
.side {
  width: 91px;
  flex: none;
  background: #535353;
}

.side button {
  display: flex;
  align-items: center;
  gap: 10px;
  width: 100%;
  margin-top: 7px;
  padding-left: 10px;
  color: #e6e6e6;
  font-weight: 700;
}

.side button svg {
  width: 17px;
}

/* taskbar */
.taskbar {
  display: flex;
  align-items: center;
  height: 40px;
  flex: none;
  background: #1c1c1c;
}

.start {
  display: grid;
  place-items: center;
  width: 48px;
}

.start svg {
  width: 16px;
}

.task-search {
  display: flex;
  align-items: center;
  gap: 11px;
  width: 344px;
  height: 40px;
  padding-left: 11px;
  border: 1px solid #606060;
  background: #333;
}

.task-search svg {
  width: 17px;
  color: #ddd;
}

.task-search input {
  flex: 1;
  font-size: 14px;
}

.task-search input::placeholder {
  color: #ccc;
  opacity: 1;
}

.task {
  display: grid;
  place-items: center;
  width: 40px;
  height: 40px;
  margin-left: 9px;
  padding-top: 2px;
  border-bottom: 2px solid transparent;
}

.task.cortana {
  margin-left: 4px;
}

.task.taskView {
  margin-left: 7px;
}

.task.chrome {
  margin-left: 12px;
}

.task.open {
  border-color: #fbd9a8;
}

.task svg {
  width: 22px;
}

.task.cortana svg, .task.taskView svg {
  width: 17px;
}

.task.headset svg {
  width: 24px;
}

.task.discord svg {
  width: 20px;
}

.ps-logo.big {
  width: 22px;
  height: 20px;
  border-width: 2px;
  border-radius: 4px;
  font-size: 11px;
  line-height: 16px;
}

.tray {
  display: flex;
  align-items: center;
  margin-left: auto;
  color: #fff;
}

.tray svg {
  width: 17px;
  margin-right: 5px;
}

.tray .up {
  width: 13px;
  margin-right: 10px;
}

.tray .network {
  margin-right: 11px;
}

.clock {
  display: flex;
  flex-direction: column;
  width: 76px;
  font-size: 11px;
  line-height: 18px;
  text-align: center;
}

.note {
  position: relative;
  margin-left: 9px;
}

.note svg {
  width: 16px;
  margin: 0;
}

.note b {
  position: absolute;
  top: 5px;
  left: 7px;
  width: 16px;
  height: 16px;
  border: 1px solid #888;
  border-radius: 50%;
  background: #333;
  font-size: 10px;
  line-height: 14px;
}

.peek {
  width: 1px;
  height: 40px;
  margin: 0 4px 0 20px;
  background: #777;
}

/* color picker dialog */
.picker {
  position: absolute;
  top: 194px;
  right: 244px;
  width: 533px;
  height: 401px;
  background: #535353;
  box-shadow: 0 0 0 1px #484848, 0 4px 12px rgba(0, 0, 0, 0.4);
  color: #e0e0e0;
  font-size: 12px;
}

.picker-title {
  display: flex;
  align-items: center;
  justify-content: space-between;
  height: 30px;
  padding: 0 9px 2px 8px;
  background: #fff;
  color: #999;
  font-size: 11px;
}

.picker-title svg {
  width: 11px;
}

.picker-body {
  display: flex;
  justify-content: space-between;
  padding: 10px 10px 0;
}

.picker-left {
  padding-top: 21px;
}

.picker-fields {
  display: flex;
}

.picker .field {
  flex: none;
  width: 256px;
  height: 256px;
}

.picker .hue {
  height: 256px;
  margin-left: 12px;
}

.web {
  display: flex;
  align-items: center;
  gap: 7px;
  margin-top: 11px;
}

.web .tick {
  width: 12px;
  height: 12px;
  border: 1px solid #888;
}

.picker-right {
  width: 214px;
}

.picker-top {
  display: flex;
  justify-content: space-between;
  height: 158px;
}

.preview {
  width: 60px;
  padding-top: 19px;
  line-height: 18px;
  text-align: center;
}

.preview i {
  display: block;
  height: 69px;
  border: 1px solid #222;
  background: #fffadc;
}

.actions {
  display: flex;
  flex-direction: column;
  width: 116px;
}

.actions button {
  height: 26px;
  margin-bottom: 8px;
  border: 1px solid #777;
  border-radius: 13px;
  color: #eee;
}

.actions .ok {
  border: 2px solid #ccc;
}

.actions .spaced {
  margin: 7px 0 8px;
}

.values {
  display: flex;
}

.value-col {
  width: 111px;
  flex: none;
}

.group {
  display: flex;
  flex-direction: column;
  gap: 5px;
  margin-bottom: 9px;
}

.value {
  display: flex;
  align-items: center;
  height: 22px;
}

.value label {
  width: 26px;
}

.value span {
  margin-left: 6px;
}

.picker input[type="radio"] {
  width: 13px;
  height: 13px;
  margin-right: 6px;
  border: 1px solid #7a7a7a;
  border-radius: 50%;
  background: #4a4a4a;
  appearance: none;
}

.picker input[type="radio"]:checked {
  border: 4px solid #ddd;
  background: #222;
}

.picker input[type="text"] {
  width: 34px;
  height: 22px;
  padding-left: 4px;
  border: 1px solid #6a6a6a;
  background: #454545;
  color: #eee;
}

.picker .lab label {
  width: 25px;
}

.picker .lab input[type="text"] {
  width: 43px;
}

.cmyk label {
  width: 44px;
  padding-right: 7px;
  text-align: right;
}

.cmyk span {
  margin-left: 8px;
}

.hex {
  display: flex;
  align-items: center;
  padding-left: 3px;
}

.hex label {
  width: 14px;
}

.picker .hex input {
  width: 80px;
}
</style>
